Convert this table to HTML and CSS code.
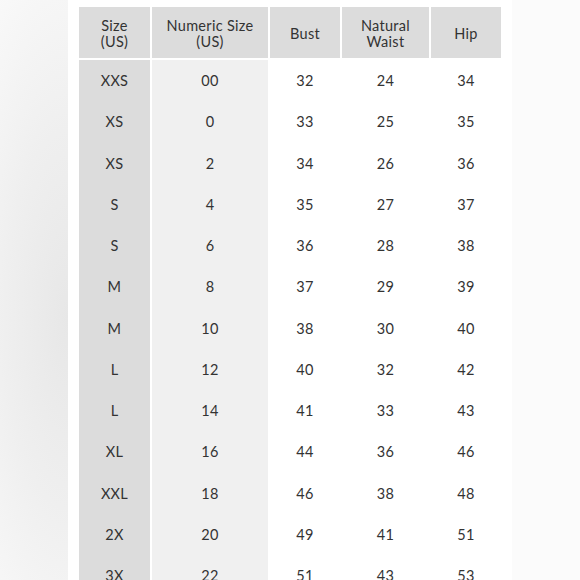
FILE: index.html
```html
<!DOCTYPE html>
<html>
<head>
<meta charset="utf-8">
<link rel="stylesheet" href="styles.css">
</head>
<body>
<div class="page">
  <div class="side-left"></div>
  <div class="main">
    <div class="chart">
      <div class="hd">Size<br>(US)</div>
      <div class="hd">Numeric Size<br>(US)</div>
      <div class="hd">Bust</div>
      <div class="hd">Natural<br>Waist</div>
      <div class="hd">Hip</div>

      <div class="c c1">XXS</div><div class="c c2">00</div><div class="c">32</div><div class="c">24</div><div class="c">34</div>
      <div class="c c1">XS</div><div class="c c2">0</div><div class="c">33</div><div class="c">25</div><div class="c">35</div>
      <div class="c c1">XS</div><div class="c c2">2</div><div class="c">34</div><div class="c">26</div><div class="c">36</div>
      <div class="c c1">S</div><div class="c c2">4</div><div class="c">35</div><div class="c">27</div><div class="c">37</div>
      <div class="c c1">S</div><div class="c c2">6</div><div class="c">36</div><div class="c">28</div><div class="c">38</div>
      <div class="c c1">M</div><div class="c c2">8</div><div class="c">37</div><div class="c">29</div><div class="c">39</div>
      <div class="c c1">M</div><div class="c c2">10</div><div class="c">38</div><div class="c">30</div><div class="c">40</div>
      <div class="c c1">L</div><div class="c c2">12</div><div class="c">40</div><div class="c">32</div><div class="c">42</div>
      <div class="c c1">L</div><div class="c c2">14</div><div class="c">41</div><div class="c">33</div><div class="c">43</div>
      <div class="c c1">XL</div><div class="c c2">16</div><div class="c">44</div><div class="c">36</div><div class="c">46</div>
      <div class="c c1">XXL</div><div class="c c2">18</div><div class="c">46</div><div class="c">38</div><div class="c">48</div>
      <div class="c c1">2X</div><div class="c c2">20</div><div class="c">49</div><div class="c">41</div><div class="c">51</div>
      <div class="c c1">3X</div><div class="c c2">22</div><div class="c">51</div><div class="c">43</div><div class="c">53</div>
    </div>
  </div>
  <div class="side-right"></div>
</div>
</body>
</html>
```
FILE: styles.css
```css
html, body {
  margin: 0;
  padding: 0;
  height: 580px;
  overflow: hidden;
  background: #ffffff;
}
.page {
  display: flex;
  height: 580px;
  font-family: Lato, "Open Sans", "Liberation Sans", sans-serif;
  color: #333333;
  font-size: 14.5px;
  letter-spacing: 0.3px;
}
.side-left {
  width: 68px;
  flex: none;
  background: radial-gradient(ellipse 140px 420px at 100% 55%, #e7e7e7 0%, #efefef 45%, #fbfbfb 100%);
}
.main {
  width: 444px;
  flex: none;
  padding: 7px 11px 0 11px;
  box-sizing: border-box;
  background: #ffffff;
}
.side-right {
  flex: 1;
  background: #fbfbfb;
}
.chart {
  display: grid;
  grid-template-columns: 71px 116px 70px 87px 70px;
  grid-template-rows: 53px;
  grid-auto-rows: 41.25px;
  column-gap: 2px;
}
.hd {
  background: #dcdcdc;
  display: flex;
  align-items: center;
  justify-content: center;
  text-align: center;
  line-height: 16px;
  height: 51px;
  padding-top: 2px;
  box-sizing: border-box;
  align-self: start;
}
.c {
  display: flex;
  align-items: center;
  justify-content: center;
  background: #ffffff;
}
.c1 {
  background: #dcdcdc;
}
.c2 {
  background: #f0f0f0;
}
```
